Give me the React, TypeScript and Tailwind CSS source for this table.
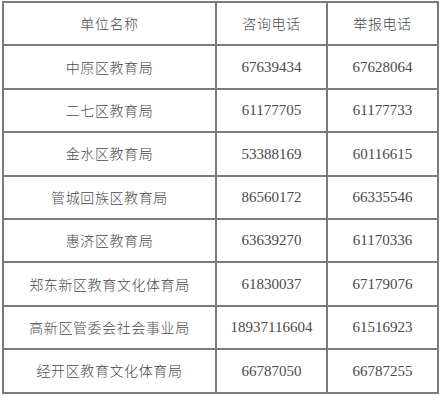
const rows: [string, string, string][] = [
  ["中原区教育局", "67639434", "67628064"],
  ["二七区教育局", "61177705", "61177733"],
  ["金水区教育局", "53388169", "60116615"],
  ["管城回族区教育局", "86560172", "66335546"],
  ["惠济区教育局", "63639270", "61170336"],
  ["郑东新区教育文化体育局", "61830037", "67179076"],
  ["高新区管委会社会事业局", "18937116604", "61516923"],
  ["经开区教育文化体育局", "66787050", "66787255"],
];

const cjk = "font-['Noto_Sans_CJK_SC','Noto_Sans',sans-serif] text-[14px] tracking-[0.6px] font-light";
const num = "font-['Liberation_Serif',serif] text-[15px]";
const cell = "h-[43.4px] border-r-2 border-b-2 border-[#7a7a7a] flex items-center justify-center text-[#4a4a4a]";

export default function App() {
  return (
    <div className="w-[441px] h-[400px] bg-white">
      <div className="ml-[2px] pt-[1px]">
        <div className="grid grid-cols-[213px_111px_111px] w-[437px] border-t-2 border-l-2 border-[#7a7a7a]">
          <div className={`${cell} ${cjk}`}>单位名称</div>
          <div className={`${cell} ${cjk}`}>咨询电话</div>
          <div className={`${cell} ${cjk}`}>举报电话</div>
          {rows.map(([name, a, b]) => (
            <div key={name} className="contents">
              <div className={`${cell} ${cjk}`}>{name}</div>
              <div className={`${cell} ${num}`}>{a}</div>
              <div className={`${cell} ${num}`}>{b}</div>
            </div>
          ))}
        </div>
      </div>
    </div>
  );
}
